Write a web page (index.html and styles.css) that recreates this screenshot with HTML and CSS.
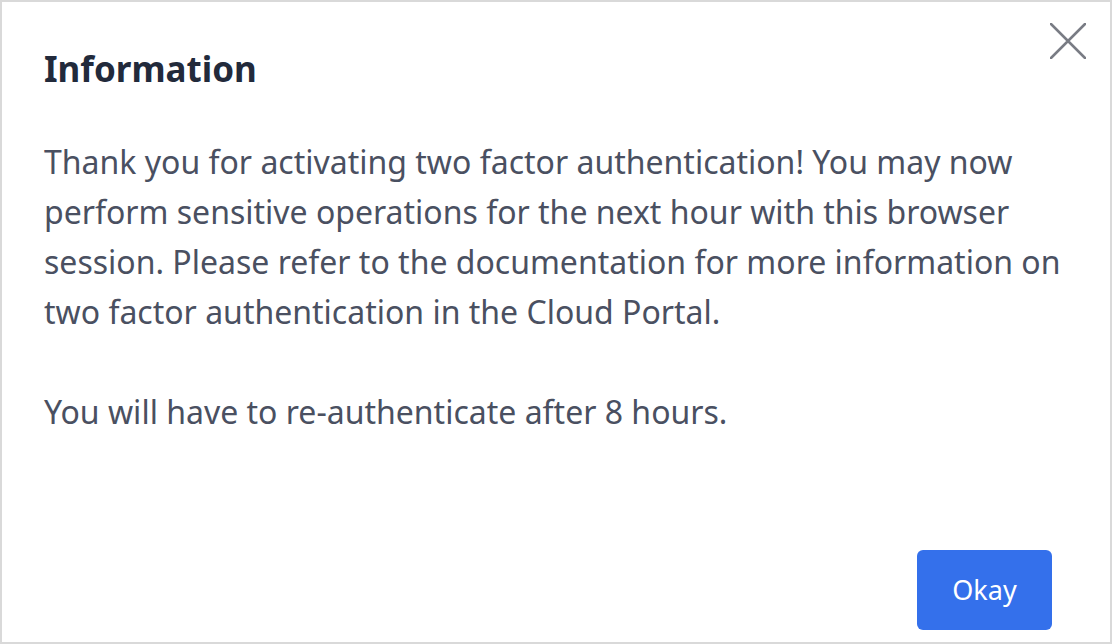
FILE: index.html
```html
<!DOCTYPE html>
<html>
<head>
<meta charset="utf-8">
<link rel="stylesheet" href="styles.css">
</head>
<body>
<div class="dialog">
  <button class="close" aria-label="Close">
    <svg width="36" height="36" viewBox="0 0 36 36"><path d="M1 1 L35 35 M35 1 L1 35" stroke="#797c84" stroke-width="2.5" stroke-linecap="round" fill="none"/></svg>
  </button>
  <h1 class="title">Information</h1>
  <div class="body">
    <p>Thank you for activating two factor authentication! You may now perform sensitive operations for the next hour with this browser session. Please refer to the documentation for more information on two factor authentication in the Cloud Portal.</p>
    <p>You will have to re-authenticate after 8 hours.</p>
  </div>
  <div class="footer">
    <button class="okay">Okay</button>
  </div>
</div>
</body>
</html>
```
FILE: styles.css
```css
html, body { margin: 0; padding: 0; }
body {
  width: 1112px;
  height: 644px;
  background: #fff;
  font-family: "Noto Sans", "Open Sans", sans-serif;
}
.dialog {
  box-sizing: border-box;
  width: 1112px;
  height: 644px;
  border: 2px solid #d9d9d9;
  position: relative;
  display: flex;
  flex-direction: column;
  padding: 42px 42px 12px 42px;
}
.close {
  position: absolute;
  top: 21px;
  right: 24px;
  background: none;
  border: 0;
  padding: 0;
  width: 36px;
  height: 36px;
  cursor: pointer;
}
.close svg { display: block; }
.title {
  margin: 0;
  font-size: 35px;
  font-weight: 700;
  color: #222a3b;
  line-height: 50px;
}
.body {
  margin-top: 43px;
  flex: 1;
  color: #4a5061;
  font-size: 32px;
  line-height: 50px;
}
.body p { margin: 0 0 50px 0; }
.footer {
  display: flex;
  justify-content: flex-end;
  padding-right: 16px;
}
.okay {
  width: 135px;
  height: 80px;
  background: #3470eb;
  color: #fff;
  border: 0;
  border-radius: 6px;
  font-family: "Noto Sans", "Open Sans", sans-serif;
  font-size: 27px;
  padding: 0 0 2px 0;
}
```
